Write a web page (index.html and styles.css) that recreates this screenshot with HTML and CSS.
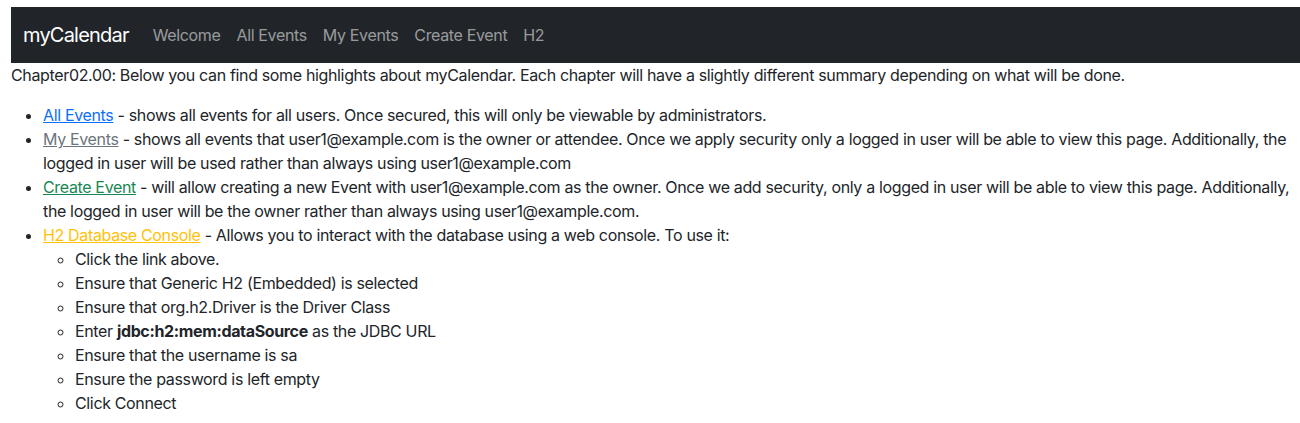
FILE: index.html
```html
<!DOCTYPE html>
<html lang="en">
<head>
<meta charset="utf-8">
<title>myCalendar</title>
<link rel="stylesheet" href="styles.css">
</head>
<body>
<nav class="navbar">
  <a class="brand" href="#">myCalendar</a>
  <ul class="nav">
    <li><a class="nav-link" href="#">Welcome</a></li>
    <li><a class="nav-link" href="#">All Events</a></li>
    <li><a class="nav-link" href="#">My Events</a></li>
    <li><a class="nav-link" href="#">Create Event</a></li>
    <li><a class="nav-link" href="#">H2</a></li>
  </ul>
</nav>
<div class="content">
  <p class="intro">Chapter02.00: Below you can find some highlights about myCalendar. Each chapter will have a slightly different summary depending on what will be done.</p>
  <ul class="list">
    <li><a class="link-primary" href="#">All Events</a> - shows all events for all users. Once secured, this will only be viewable by administrators.</li>
    <li><a class="link-secondary" href="#">My Events</a> - shows all events that user1@example.com is the owner or attendee. Once we apply security only a logged in user will be able to view this page. Additionally, the logged in user will be used rather than always using user1@example.com</li>
    <li><a class="link-success" href="#">Create Event</a> - will allow creating a new Event with user1@example.com as the owner. Once we add security, only a logged in user will be able to view this page. Additionally, the logged in user will be the owner rather than always using user1@example.com.</li>
    <li><a class="link-warning" href="#">H2 Database Console</a> - Allows you to interact with the database using a web console. To use it:
      <ul class="sublist">
        <li>Click the link above.</li>
        <li>Ensure that Generic H2 (Embedded) is selected</li>
        <li>Ensure that org.h2.Driver is the Driver Class</li>
        <li>Enter <strong>jdbc:h2:mem:dataSource</strong> as the JDBC URL</li>
        <li>Ensure that the username is sa</li>
        <li>Ensure the password is left empty</li>
        <li>Click Connect</li>
      </ul>
    </li>
  </ul>
</div>
</body>
</html>
```
FILE: styles.css
```css
* { box-sizing: border-box; }
body {
  margin: 7px 0 0 11px;
  font-family: Inter, "Noto Sans", "Liberation Sans", sans-serif;
  font-size: 16px;
  line-height: 24px;
  letter-spacing: -0.35px;
  color: #212529;
  background: #fff;
}
.navbar {
  background: #212529;
  height: 56px;
  display: flex;
  align-items: center;
  padding: 0 12px;
}
.brand {
  color: #fff;
  text-decoration: none;
  font-size: 20px;
  line-height: 30px;
  letter-spacing: -0.8px;
  margin-right: 16px;
}
.nav {
  display: flex;
  list-style: none;
  margin: 0;
  padding: 0;
}
.nav-link {
  display: block;
  color: rgba(255,255,255,0.55);
  text-decoration: none;
  padding: 8px;
}
.intro { margin: 0 0 16px; }
.list { margin: 0; padding-left: 32px; }
.sublist { margin: 0; padding-left: 32px; list-style: circle; }
strong { font-weight: 700; }
.link-primary { color: #0d6efd; }
.link-secondary { color: #6c757d; }
.link-success { color: #198754; }
.link-warning { color: #ffc107; }
```
